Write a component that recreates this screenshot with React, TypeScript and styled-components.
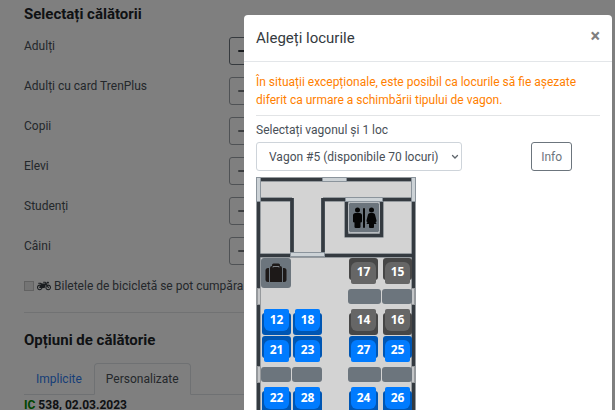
import React from "react";
import styled, { createGlobalStyle, css } from "styled-components";
import { FaMotorcycle } from "react-icons/fa";

const GlobalStyle = createGlobalStyle`
  *, *::before, *::after { box-sizing: border-box; }
  html, body { margin: 0; height: 100%; overflow: hidden; }
  body {
    background: #fff;
    color: #495057;
    font-family: Roboto, "Liberation Sans", sans-serif;
    font-size: 12px;
    line-height: 18px;
  }
  button, input, select { font: inherit; color: inherit; margin: 0; }
`;

const Page = styled.main`
  padding: 4px 24px 0;
`;

const Heading = styled.h2`
  margin: 0;
  color: #212529;
  font-size: 15px;
  font-weight: 700;
  line-height: 20px;
`;

const PassengerList = styled.div`
  display: grid;
  gap: 12px;
  padding-top: 13px;
`;

const PassengerRow = styled.div`
  display: flex;
  height: 28px;
`;

const PassengerLabel = styled.label`
  flex: 0 0 205px;
`;

const Stepper = styled.div`
  display: flex;
  flex: 1;
`;

const StepButton = styled.button`
  display: flex;
  align-items: center;
  justify-content: center;
  width: 30px;
  padding: 0;
  border: 1px solid #6c757d;
  border-radius: 3px;
  background: transparent;
  color: #343a40;

  &:disabled { opacity: 0.65; }
`;

const StepInput = styled.input`
  flex: 1;
  min-width: 0;
  border: 1px solid #ced4da;
  text-align: center;
`;

const BikeRow = styled.label`
  display: flex;
  align-items: center;
  gap: 3px;
  margin-top: 12px;
  white-space: nowrap;
  overflow: hidden;

  svg { flex: none; color: #343a40; }
`;

const CheckBox = styled.input`
  appearance: none;
  flex: none;
  width: 10px;
  height: 10px;
  border: 1px solid #c4c4c4;
  background: #e8e8e8;
`;

const BikeNote = styled.span`
  color: #fd7e14;
`;

const Rule = styled.hr`
  width: 100%;
  margin: 0;
  border: 0;
  border-top: 1px solid #e2e4e6;
`;

const Options = styled.section`
  margin-top: 17px;
  padding-top: 17px;
  border-top: 1px solid #e2e4e6;
`;

const Tabs = styled.div`
  display: flex;
  margin-top: 13px;
  border-bottom: 1px solid #dee2e6;
`;

const Tab = styled.button<{ $active?: boolean }>`
  height: 32px;
  margin-bottom: -1px;
  padding: 0 11px;
  border: 1px solid transparent;
  border-radius: 4px 4px 0 0;
  background: transparent;
  color: #2f7df0;
  ${(p) =>
    p.$active &&
    css`
      border-color: #dee2e6 #dee2e6 #fff;
      background: #fff;
      color: #495057;
    `}
`;

const Train = styled.p`
  margin: 1px 0 0;
  color: #212529;
  font-weight: 700;

  span { color: #008a00; }
`;

const Backdrop = styled.div`
  position: fixed;
  inset: 0;
  display: flex;
  padding: 15px 3px 0 244px;
  overflow: hidden;
  background: rgba(0, 0, 0, 0.5);
`;

const Dialog = styled.section`
  flex: 1;
  align-self: flex-start;
  min-width: 0;
  border-radius: 4px;
  background: #fff;
`;

const DialogHeader = styled.header`
  display: flex;
  align-items: center;
  justify-content: space-between;
  height: 47px;
  padding: 0 12px;
  border-bottom: 1px solid #e3e6e9;
`;

const DialogTitle = styled.h1`
  margin: 0;
  color: #343a40;
  font-size: 15px;
  font-weight: 400;
`;

const CloseButton = styled.button`
  margin-bottom: 4px;
  padding: 0;
  border: 0;
  background: transparent;
  color: #7f7f7f;
  font-size: 18px;
  font-weight: 700;
`;

const DialogBody = styled.div`
  padding: 11px 12px;
`;

const Warning = styled.p`
  margin: 0 0 6px;
  color: #ff8000;
`;

const FieldLabel = styled.label`
  display: block;
  margin: 5px 0 3px;
`;

const Controls = styled.div`
  display: grid;
  grid-template-columns: 3fr 1fr 1fr;
  height: 29px;
`;

const SelectBox = styled.div`
  position: relative;
  display: flex;

  svg {
    position: absolute;
    top: 11px;
    right: 3px;
    pointer-events: none;
  }
`;

const WagonSelect = styled.select`
  appearance: none;
  flex: 1;
  min-width: 0;
  padding: 0 16px 0 12px;
  border: 1px solid #ced4da;
  border-radius: 3px;
  background: #fff;
`;

const InfoButton = styled.button`
  grid-column: 3;
  justify-self: start;
  padding: 0 9px;
  border: 1px solid #6c757d;
  border-radius: 3px;
  background: #fff;
  color: #6c757d;
`;

const Wagon = styled.div`
  position: relative;
  width: 160px;
  margin-top: 6px;
  padding: 81px 4px 0 5px;
  background: #d3d3d3;
`;

const Walls = styled.svg`
  position: absolute;
  top: 0;
  left: 0;
`;

const SeatGrid = styled.div`
  position: relative;
  display: grid;
  grid-template-columns: 30px 30px 24px 33px 30px;
  grid-auto-rows: 30px 15px 30px;
  gap: 1px;
`;

const Place = styled.div<{ $col: number; $row: number }>`
  display: flex;
  grid-column: ${(p) => p.$col};
  grid-row: ${(p) => p.$row};
`;

const SeatButton = styled.button<{ $taken?: boolean; $back: "top" | "bottom" }>`
  position: relative;
  align-self: ${(p) => (p.$back === "top" ? "flex-start" : "flex-end")};
  width: 29px;
  height: 26px;
  margin-left: 1px;
  padding: 0;
  border: 0;
  background: transparent;
  color: #fff;
  font-family: "Noto Sans", sans-serif;
  font-weight: 700;

  &::before {
    content: "";
    position: absolute;
    inset: ${(p) => (p.$back === "top" ? "0 0 4px" : "4px 0 0")};
    border-radius: 3px;
    background: ${(p) => (p.$taken ? "#474747" : "#0056b3")};
  }
`;

const Cushion = styled.span<{ $taken?: boolean; $back: "top" | "bottom" }>`
  position: relative;
  display: block;
  height: 22px;
  margin: ${(p) => (p.$back === "top" ? "4px 2px 0" : "0 2px 4px")};
  border-radius: ${(p) => (p.$back === "top" ? "6px 6px 2px 2px" : "2px 2px 6px 6px")};
  background: ${(p) => (p.$taken ? "#666" : "#007bff")};
  line-height: ${(p) => (p.$back === "top" ? "20px" : "22px")};
`;

const Table = styled.span`
  flex: 1;
  border-radius: 3px;
  background: #6c757d;
`;

const Luggage = styled.span`
  display: flex;
  flex: 1;
  align-items: center;
  justify-content: center;
  border-radius: 3px;
  background: #6c757d;
`;

const passengers = ["Adulți", "Adulți cu card TrenPlus", "Copii", "Elevi", "Studenți", "Câini"];

type Seat = { n: number; col: number; row: number; back: "top" | "bottom"; taken?: boolean };

const seats: Seat[] = [
  { n: 17, col: 4, row: 1, back: "top", taken: true },
  { n: 15, col: 5, row: 1, back: "top", taken: true },
  { n: 12, col: 1, row: 3, back: "bottom" },
  { n: 18, col: 2, row: 3, back: "bottom" },
  { n: 14, col: 4, row: 3, back: "bottom", taken: true },
  { n: 16, col: 5, row: 3, back: "bottom", taken: true },
  { n: 21, col: 1, row: 4, back: "top" },
  { n: 23, col: 2, row: 4, back: "top" },
  { n: 27, col: 4, row: 4, back: "top" },
  { n: 25, col: 5, row: 4, back: "top" },
  { n: 22, col: 1, row: 6, back: "bottom" },
  { n: 28, col: 2, row: 6, back: "bottom" },
  { n: 24, col: 4, row: 6, back: "bottom" },
  { n: 26, col: 5, row: 6, back: "bottom" },
];

const tables = [
  { col: 4, row: 2 },
  { col: 5, row: 2 },
  { col: 1, row: 5 },
  { col: 2, row: 5 },
  { col: 4, row: 5 },
  { col: 5, row: 5 },
];

const wallPath =
  "M2.500 24V240M157.500 24V240M4 2.500H157M4 22.500H36M67 22.500H156M4 78.500H156M36 21V78M67 21V78M90.500 24V58.500H125.500V24";

function Minus() {
  return (
    <svg width="12" height="12" viewBox="0 0 12 12" aria-hidden="true">
      <path d="M1 6h10" stroke="currentColor" strokeWidth="2" strokeLinecap="round" />
    </svg>
  );
}

function Chevron() {
  return (
    <svg width="8" height="8" viewBox="0 0 8 8" aria-hidden="true">
      <path d="M1.500 2.500 4 5l2.500-2.500" fill="none" stroke="#5f666c" strokeWidth="1.300" strokeLinecap="round" />
    </svg>
  );
}

function WagonWalls() {
  return (
    <Walls width="160" height="240" viewBox="0 0 160 240" aria-hidden="true">
      <path d={wallPath} stroke="#59626b" strokeWidth="4" fill="none" />
      <path d={wallPath} stroke="#343a40" strokeWidth="3" fill="none" />
      <g fill="#ccd2d6" stroke="#8b949c">
        <rect x="0.500" y="0.500" width="4" height="24" />
        <rect x="155.500" y="0.500" width="4" height="24" />
        <rect x="66.500" y="0.500" width="24" height="4" />
        <rect x="89.500" y="20.500" width="37" height="4" />
        <rect x="34.500" y="75.500" width="34" height="4" />
      </g>
      <g fill="#c4c6c8" stroke="#96999c">
        <rect x="1.500" y="111.500" width="3" height="16" />
        <rect x="155.500" y="111.500" width="3" height="16" />
        <rect x="1.500" y="189.500" width="3" height="16" />
        <rect x="155.500" y="189.500" width="3" height="16" />
      </g>
      <rect x="92.500" y="25.500" width="31" height="30" rx="2" fill="#6c757d" stroke="#b9bdc1" />
      <g fill="#050505">
        <circle cx="101.500" cy="33" r="2.500" />
        <path d="M99.500 36h4q2.500 0 2.500 2.500v6q0 1-1.500 1V50q0 1-1.300 1h-3.400q-1.300 0-1.300-1v-4.500q-1.500 0-1.500-1v-6Q97 36 99.500 36z" />
        <rect x="107" y="31" width="2" height="20" rx="1" />
        <circle cx="115.500" cy="33" r="2.500" />
        <path d="M114 36h3q1.500 0 2 1.500l1.500 6q.2 1.500-1 1.500l1 2h-2.500v3q0 1-1 1h-3q-1 0-1-1v-3h-2.500l1-2q-1.200 0-1-1.500l1.500-6q.5-1.500 2-1.500z" />
      </g>
    </Walls>
  );
}

function LuggageIcon() {
  return (
    <svg width="22" height="20" viewBox="0 0 22 20" aria-hidden="true">
      <g fill="#1d1918">
        <path d="M4 5v14H3q-2.500 0-2.500-2.500v-9Q.5 5 3 5z" />
        <path d="M18 5v14h1q2.500 0 2.500-2.500v-9Q21.500 5 19 5z" />
        <path d="M7 3V2q0-1.500 1.500-1.500h5Q15 .5 15 2v1q2 0 2 2v14H5V5q0-2 2-2z" />
      </g>
      <path d="M8 4.500V3.500h6v1" fill="none" stroke="#7d8186" />
    </svg>
  );
}

export default function App() {
  return (
    <>
      <GlobalStyle />
      <Page>
        <Heading>Selectați călătorii</Heading>
        <PassengerList>
          {passengers.map((name, i) => (
            <PassengerRow key={name}>
              <PassengerLabel htmlFor={`passenger-${i}`}>{name}</PassengerLabel>
              <Stepper>
                <StepButton type="button" disabled={i > 0} aria-label={`Mai puțin: ${name}`}>
                  <Minus />
                </StepButton>
                <StepInput id={`passenger-${i}`} defaultValue={i === 0 ? 1 : 0} />
              </Stepper>
            </PassengerRow>
          ))}
        </PassengerList>
        <BikeRow>
          <CheckBox type="checkbox" disabled />
          <FaMotorcycle size={14} />
          <span>
            Biletele de bicicletă se pot cumpăra <BikeNote>doar</BikeNote>
          </span>
        </BikeRow>
        <Options>
          <Heading>Opțiuni de călătorie</Heading>
          <Tabs role="tablist">
            <Tab type="button" role="tab" aria-selected={false}>Implicite</Tab>
            <Tab type="button" role="tab" aria-selected $active>Personalizate</Tab>
          </Tabs>
          <Train>
            <span>IC</span> 538, 02.03.2023
          </Train>
        </Options>
      </Page>
      <Backdrop>
        <Dialog role="dialog" aria-modal="true" aria-labelledby="dialog-title">
          <DialogHeader>
            <DialogTitle id="dialog-title">Alegeți locurile</DialogTitle>
            <CloseButton type="button" aria-label="Închide">×</CloseButton>
          </DialogHeader>
          <DialogBody>
            <Warning>
              În situații excepționale, este posibil ca locurile să fie așezate diferit ca urmare a
              schimbării tipului de vagon.
            </Warning>
            <Rule />
            <FieldLabel htmlFor="wagon">Selectați vagonul și 1 loc</FieldLabel>
            <Controls>
              <SelectBox>
                <WagonSelect id="wagon">
                  <option>Vagon #5 (disponibile 70 locuri)</option>
                </WagonSelect>
                <Chevron />
              </SelectBox>
              <InfoButton type="button">Info</InfoButton>
            </Controls>
            <Wagon>
              <WagonWalls />
              <SeatGrid>
                <Place $col={1} $row={1}>
                  <Luggage>
                    <LuggageIcon />
                  </Luggage>
                </Place>
                {tables.map((t) => (
                  <Place key={`${t.col}-${t.row}`} $col={t.col} $row={t.row}>
                    <Table />
                  </Place>
                ))}
                {seats.map((s) => (
                  <Place key={s.n} $col={s.col} $row={s.row}>
                    <SeatButton type="button" disabled={s.taken} $taken={s.taken} $back={s.back}>
                      <Cushion $taken={s.taken} $back={s.back}>{s.n}</Cushion>
                    </SeatButton>
                  </Place>
                ))}
              </SeatGrid>
            </Wagon>
          </DialogBody>
        </Dialog>
      </Backdrop>
    </>
  );
}
